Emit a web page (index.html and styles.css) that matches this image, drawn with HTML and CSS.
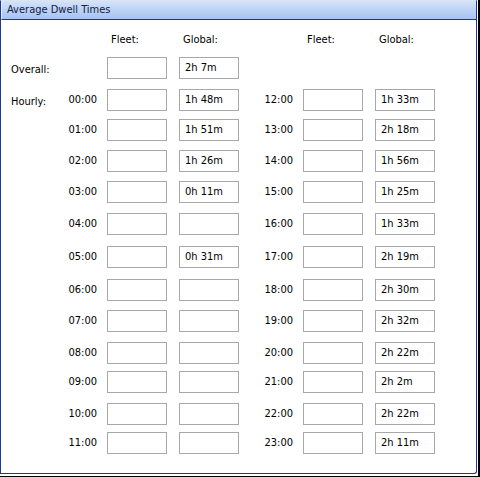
FILE: index.html
```html
<!DOCTYPE html>
<html>
<head>
<meta charset="utf-8">
<link rel="stylesheet" href="styles.css">
</head>
<body>
<div class="frame">
  <div class="panel">
    <div class="title">Average Dwell Times</div>
    <div class="grid">
      <span></span><span></span><span class="colhead">Fleet:</span><span class="colhead">Global:</span><span></span><span class="colhead">Fleet:</span><span class="colhead">Global:</span>

      <span class="label">Overall:</span><span></span><span class="box"></span><span class="box">2h 7m</span><span></span><span></span><span></span>

      <span class="label">Hourly:</span><span class="time">00:00</span><span class="box"></span><span class="box">1h 48m</span><span class="time">12:00</span><span class="box"></span><span class="box">1h 33m</span>
      <span></span><span class="time">01:00</span><span class="box"></span><span class="box">1h 51m</span><span class="time">13:00</span><span class="box"></span><span class="box">2h 18m</span>
      <span></span><span class="time">02:00</span><span class="box"></span><span class="box">1h 26m</span><span class="time">14:00</span><span class="box"></span><span class="box">1h 56m</span>
      <span></span><span class="time">03:00</span><span class="box"></span><span class="box">0h 11m</span><span class="time">15:00</span><span class="box"></span><span class="box">1h 25m</span>
      <span></span><span class="time">04:00</span><span class="box"></span><span class="box"></span><span class="time">16:00</span><span class="box"></span><span class="box">1h 33m</span>
      <span></span><span class="time">05:00</span><span class="box"></span><span class="box">0h 31m</span><span class="time">17:00</span><span class="box"></span><span class="box">2h 19m</span>
      <span></span><span class="time">06:00</span><span class="box"></span><span class="box"></span><span class="time">18:00</span><span class="box"></span><span class="box">2h 30m</span>
      <span></span><span class="time">07:00</span><span class="box"></span><span class="box"></span><span class="time">19:00</span><span class="box"></span><span class="box">2h 32m</span>
      <span></span><span class="time">08:00</span><span class="box"></span><span class="box"></span><span class="time">20:00</span><span class="box"></span><span class="box">2h 22m</span>
      <span></span><span class="time">09:00</span><span class="box"></span><span class="box"></span><span class="time">21:00</span><span class="box"></span><span class="box">2h 2m</span>
      <span></span><span class="time">10:00</span><span class="box"></span><span class="box"></span><span class="time">22:00</span><span class="box"></span><span class="box">2h 22m</span>
      <span></span><span class="time">11:00</span><span class="box"></span><span class="box"></span><span class="time">23:00</span><span class="box"></span><span class="box">2h 11m</span>
    </div>
  </div>
</div>
</body>
</html>
```

FILE: styles.css
```css
html, body {
  margin: 0;
  padding: 0;
  background: #ffffff;
}

body {
  font-family: "DejaVu Sans Condensed", "DejaVu Sans", sans-serif;
  font-stretch: semi-condensed;
  font-size: 11px;
  color: #000;
}

.frame {
  width: 480px;
  height: 477px;
  box-sizing: border-box;
  padding-right: 1px;
  padding-bottom: 2px;
  border-right: 2px solid #000;
  border-bottom: 1px solid #000;
}

.panel {
  width: 477px;
  height: 474px;
  box-sizing: border-box;
  border: 1px solid #1c3a8e;
  border-top-color: #dde4ee;
  border-bottom-right-radius: 3px;
  background: #fff;
}

.title {
  height: 18px;
  line-height: 18px;
  padding-left: 5px;
  border-left: 1px solid #e4ecf8;
  border-bottom: 1px solid #1c3a8e;
  background: linear-gradient(to bottom, #d3e3fa, #a6c3f2);
  color: #10203f;
}

.grid {
  display: grid;
  margin: 10px 0 0 9px;
  grid-template-columns: 50px 37px 70px 72px 54px 70px 72px;
  grid-template-rows: 27px 32px 30px 31px 31px 32px 33px 33px 31px 32px 29px 32px 29px 22px;
  align-items: start;
}

.colhead {
  justify-self: end;
  width: 60px;
  box-sizing: border-box;
  padding-left: 4px;
  line-height: 20px;
}

.label {
  line-height: 22px;
  padding-top: 2px;
  padding-left: 1px;
}

.time {
  justify-self: end;
  line-height: 22px;
}

.box {
  justify-self: end;
  width: 60px;
  height: 22px;
  box-sizing: border-box;
  border: 1px solid #a8a8a8;
  padding-left: 5px;
  line-height: 20px;
  background: #fff;
}
```
